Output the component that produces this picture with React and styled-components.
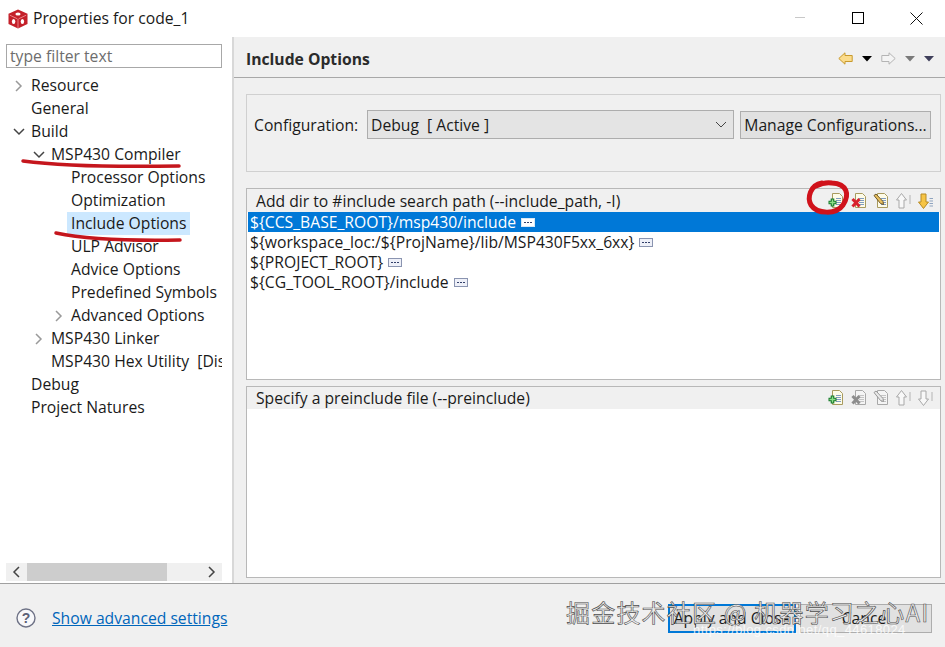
import React from "react";
import styled, { createGlobalStyle } from "styled-components";

const Global = createGlobalStyle`
  html, body {
    margin: 0;
    padding: 0;
    background: #f0f0f0;
  }
`;

const Window = styled.div`
  position: relative;
  width: 945px;
  height: 647px;
  overflow: hidden;
  display: flex;
  flex-direction: column;
  background: #f0f0f0;
  color: #1a1a1a;
  font-family: "Open Sans", "Noto Sans", sans-serif;
  font-size: 15.7px;
`;

const TitleBar = styled.div`
  height: 37px;
  flex: none;
  background: #fff;
  display: flex;
  align-items: center;
  padding: 0 0 0 8px;
`;

const Title = styled.div`
  margin-left: 5px;
  flex: 1;
  margin-top: -1px;
`;

const WinButtons = styled.div`
  display: flex;
  align-items: center;
  margin-top: -1px;
`;

const WinButton = styled.div`
  width: 58px;
  height: 35px;
  display: flex;
  align-items: center;
  justify-content: center;
`;

const Main = styled.div`
  flex: 1;
  display: flex;
  min-height: 0;
  border-bottom: 1px solid #a0a0a0;
`;

const Sidebar = styled.div`
  width: 234px;
  flex: none;
  background: #fff;
  display: flex;
  flex-direction: column;
  padding: 7px 10px 2px 6px;
  box-sizing: border-box;
  border-right: 2px solid #d8d8d8;
`;

const Filter = styled.div`
  height: 24px;
  flex: none;
  border: 1px solid #a8a8a8;
  box-sizing: border-box;
  padding-left: 3px;
  line-height: 22px;
  color: #6d6d6d;
`;

const Tree = styled.div`
  flex: 1;
  padding-top: 6px;
  overflow: hidden;
`;

const Row = styled.div`
  height: 23px;
  display: flex;
  align-items: center;
  white-space: nowrap;
  padding-left: ${(p) => p.$level * 20 + 6}px;
`;

const Twist = styled.span`
  width: 19px;
  flex: none;
  box-sizing: border-box;
  padding-left: 1px;
  display: flex;
  align-items: center;
`;

const Label = styled.span`
  padding: 0 4px;
  margin-left: -4px;
  line-height: 23px;
  background: ${(p) => (p.$selected ? "#cce8ff" : "transparent")};
`;

const HScroll = styled.div`
  height: 18px;
  flex: none;
  display: flex;
  background: #f0f0f0;
`;

const ScrollEnd = styled.div`
  width: 21px;
  display: flex;
  align-items: center;
  justify-content: center;
`;

const ScrollTrack = styled.div`
  flex: 1;
  display: flex;
`;

const ScrollThumb = styled.div`
  width: 140px;
  background: #cdcdcd;
`;

const Content = styled.div`
  flex: 1;
  min-width: 0;
  display: flex;
  flex-direction: column;
`;

const Header = styled.div`
  height: 41px;
  flex: none;
  box-sizing: border-box;
  border-bottom: 1px solid #a8a8a8;
  display: flex;
  align-items: center;
  padding: 3px 11px 0 12px;
`;

const Heading = styled.div`
  flex: 1;
  font-weight: 700;
  color: #2b2b2b;
`;

const NavIcons = styled.div`
  display: flex;
  align-items: center;
  gap: 9px;
`;

const Body = styled.div`
  flex: 1;
  min-height: 0;
  display: flex;
  flex-direction: column;
  padding: 16px 4px 5px 12px;
`;

const ConfigBox = styled.div`
  height: 78px;
  flex: none;
  box-sizing: border-box;
  border: 1px solid #d0d0d0;
  display: flex;
  align-items: flex-start;
  padding: 15px 9px 0 7px;
`;

const ConfigLabel = styled.span`
  line-height: 30px;
  width: 113px;
  flex: none;
  white-space: nowrap;
`;

const Select = styled.div`
  width: 367px;
  height: 29px;
  flex: none;
  box-sizing: border-box;
  background: #e4e4e4;
  border: 1px solid #adadad;
  display: flex;
  align-items: center;
  justify-content: space-between;
  padding: 0 6px 0 3px;
`;

const ManageButton = styled.div`
  margin: 1px 0 0 6px;
  flex: 1;
  height: 28px;
  box-sizing: border-box;
  background: #e1e1e1;
  border: 1px solid #adadad;
  display: flex;
  align-items: center;
  justify-content: center;
  white-space: nowrap;
`;

const Panel = styled.div`
  flex: 1;
  min-height: 0;
  box-sizing: border-box;
  border: 1px solid #b8b8b8;
  margin-top: ${(p) => p.$top}px;
  display: flex;
  flex-direction: column;
`;

const PanelHead = styled.div`
  height: ${(p) => p.$height}px;
  flex: none;
  display: flex;
  align-items: center;
  justify-content: space-between;
  padding: 0 6px 0 9px;
`;

const Tools = styled.div`
  display: flex;
  align-items: center;
  gap: 6.5px;
`;

const List = styled.div`
  flex: 1;
  background: #fff;
`;

const ListRow = styled.div`
  height: 20px;
  display: flex;
  align-items: center;
  gap: 5px;
  padding-left: 2px;
  margin: 0 1px;
  white-space: nowrap;
  background: ${(p) => (p.$selected ? "#0078d7" : "transparent")};
  color: ${(p) => (p.$selected ? "#fff" : "#1a1a1a")};
`;

const Dots = styled.span`
  width: 14px;
  height: 9px;
  box-sizing: border-box;
  border: 1px solid ${(p) => (p.$selected ? "#d8e8f6" : "#8a94b0")};
  background: ${(p) => (p.$selected ? "#fff" : "#eef0f8")};
  display: inline-flex;
  align-items: center;
  justify-content: center;
  gap: 1px;
  margin-top: 1px;

  i {
    width: 2px;
    height: 1px;
    background: #33406a;
  }
`;

const Footer = styled.div`
  height: 63px;
  flex: none;
  box-sizing: border-box;
  display: flex;
  align-items: center;
  padding: 5px 13px 0 16px;
`;

const Link = styled.a`
  margin-left: 16px;
  color: #0066bb;
  text-decoration: underline;
  flex: 1;
`;

const FooterButton = styled.div`
  height: 29px;
  box-sizing: border-box;
  width: ${(p) => p.$width}px;
  margin-left: 4px;
  background: #e1e1e1;
  border: ${(p) => (p.$primary ? "2px solid #0078d7" : "1px solid #adadad")};
  display: flex;
  align-items: center;
  justify-content: center;
`;

const Scribbles = styled.svg`
  position: absolute;
  left: 0;
  top: 0;
  pointer-events: none;
`;

const Watermark = styled.div`
  position: absolute;
  left: 566px;
  top: 596px;
  font-family: "Noto Sans CJK SC", sans-serif;
  font-size: 24px;
  line-height: 32px;
  letter-spacing: 1.2px;
  white-space: nowrap;
  color: #ececec;
  -webkit-text-stroke: 0.6px #4a4a4a;
`;

const WatermarkUrl = styled.div`
  position: absolute;
  left: 693px;
  top: 622px;
  font-family: "Liberation Sans", sans-serif;
  font-size: 13px;
  letter-spacing: 0.4px;
  white-space: nowrap;
  color: rgba(255, 255, 255, 0.8);
`;

const Logo = () => (
  <svg width="20" height="20" viewBox="0 0 20 20">
    <path d="M10 0.5 L19.5 4.8 V15 L10 19.5 L0.5 15 V4.8 Z" fill="#c4202a" />
    <path d="M1.8 6.2 L9.4 9.8 M18.2 6.2 L10.6 9.8 M10 10 V19" stroke="#f08a8e" strokeWidth="0.9" />
    <ellipse cx="10" cy="5" rx="2.6" ry="1.5" fill="#fff" />
    <ellipse cx="5.6" cy="12.4" rx="1.7" ry="2.5" fill="#fff" />
    <ellipse cx="14.4" cy="12.4" rx="1.7" ry="2.5" fill="#fff" />
  </svg>
);

const Caret = ({ color }) => (
  <svg width="10" height="6" viewBox="0 0 10 6">
    <path d="M0 0 H10 L5 5.5 Z" fill={color} />
  </svg>
);

const NavArrow = ({ dir, fill, stroke }) => (
  <svg width="15" height="13" viewBox="0 0 15 13" style={{ transform: dir === "right" ? "scaleX(-1)" : "none" }}>
    <path d="M0.8 6.5 L7 0.8 V3.5 H14.2 V9.5 H7 V12.2 Z" fill={fill} stroke={stroke} strokeWidth="1" />
  </svg>
);

const Chevron = ({ dir, color = "#444", w = 1.5 }) => {
  const paths = {
    right: "M3 1 L8 6 L3 11",
    down: "M1 3 L6 8 L11 3",
    left: "M8 1 L3 6 L8 11",
  };
  return (
    <svg width="12" height="12" viewBox="0 0 12 12">
      <path d={paths[dir]} fill="none" stroke={color} strokeWidth={w} />
    </svg>
  );
};

// page with lines, shared by the add / delete / edit buttons
const Page = ({ off }) => (
  <g>
    <path
      d="M4.5 0.5 H11.5 L14.5 3.5 V14.5 H4.5 Z"
      fill={off ? "#f4f4f4" : "#fdfbe8"}
      stroke={off ? "#a8a8a8" : "#a89a5e"}
    />
    <path
      d="M8 5.5 H13 M8 7.5 H13 M8 9.5 H13 M8 11.5 H13"
      stroke={off ? "#c4c4c4" : "#7f9cc0"}
    />
  </g>
);

const AddIcon = () => (
  <svg width="16" height="16" viewBox="0 0 16 16">
    <Page />
    <path d="M4.5 5.5 V13.5 M0.5 9.5 H8.5" stroke="#15782a" strokeWidth="3.6" />
    <path d="M4.5 6.5 V12.5 M1.5 9.5 H7.5" stroke="#8fe08a" strokeWidth="1.4" />
  </svg>
);

const DeleteIcon = ({ off }) => (
  <svg width="16" height="16" viewBox="0 0 16 16">
    <Page off={off} />
    <path d="M1.5 6 L8.5 13.5 M8.5 6 L1.5 13.5" stroke={off ? "#8d8d8d" : "#d8202c"} strokeWidth="3" />
  </svg>
);

const EditIcon = ({ off }) => (
  <svg width="16" height="16" viewBox="0 0 16 16">
    <Page off={off} />
    <path
      d="M1 2.5 L3 1 L10 8.5 L10.5 11.5 L7.5 10.5 Z"
      fill={off ? "#e8e8e8" : "#e8c060"}
      stroke={off ? "#8d8d8d" : "#5f4a1c"}
      strokeWidth="0.9"
    />
  </svg>
);

const MoveIcon = ({ dir, off }) => (
  <svg width="16" height="18" viewBox="0 0 16 18">
    <g transform={dir === "down" ? "rotate(180 5.5 9)" : undefined}>
      <path
        d="M5.5 1.5 L10.5 8 H8 V16 H3 V8 H0.5 Z"
        fill={off ? "#f8f8f8" : "#f6c445"}
        stroke={off ? "#a8a8a8" : "#b78a24"}
      />
    </g>
    {off ? (
      <path d="M14 3 V12" stroke="#b4b4b4" />
    ) : (
      <path d="M11.5 6.5 H15 M11.5 9 H15 M11.5 11.5 H15 M11.5 14 H15" stroke="#8fa4bf" />
    )}
  </svg>
);

const HelpIcon = () => (
  <svg width="20" height="20" viewBox="0 0 20 20">
    <circle cx="10" cy="10" r="9" fill="#f8f8fa" stroke="#6e7286" strokeWidth="1.4" />
    <text x="10" y="15" textAnchor="middle" fontFamily="Liberation Sans" fontWeight="700" fontSize="14" fill="#5c6076">
      ?
    </text>
  </svg>
);

const treeRows = [
  { text: "Resource", level: 0, twist: "right", light: true },
  { text: "General", level: 0 },
  { text: "Build", level: 0, twist: "down" },
  { text: "MSP430 Compiler", level: 1, twist: "down" },
  { text: "Processor Options", level: 2 },
  { text: "Optimization", level: 2 },
  { text: "Include Options", level: 2, selected: true },
  { text: "ULP Advisor", level: 2 },
  { text: "Advice Options", level: 2 },
  { text: "Predefined Symbols", level: 2 },
  { text: "Advanced Options", level: 2, twist: "right", light: true },
  { text: "MSP430 Linker", level: 1, twist: "right", light: true },
  { text: "MSP430 Hex Utility\u00a0\u00a0[Disabled]", level: 1 },
  { text: "Debug", level: 0 },
  { text: "Project Natures", level: 0 },
];

const includePaths = [
  "${CCS_BASE_ROOT}/msp430/include",
  "${workspace_loc:/${ProjName}/lib/MSP430F5xx_6xx}",
  "${PROJECT_ROOT}",
  "${CG_TOOL_ROOT}/include",
];

const App = () => {
  return (
    <Window>
      <Global />
      <TitleBar>
        <Logo />
        <Title>Properties for code_1</Title>
        <WinButtons>
          <WinButton>
            <svg width="10" height="2"><rect width="10" height="1" fill="#c8c8c8" /></svg>
          </WinButton>
          <WinButton>
            <svg width="12" height="12"><rect x="0.5" y="0.5" width="11" height="11" fill="none" stroke="#000" /></svg>
          </WinButton>
          <WinButton>
            <svg width="13" height="13"><path d="M0.5 0.5 L12.5 12.5 M12.5 0.5 L0.5 12.5" stroke="#111" /></svg>
          </WinButton>
        </WinButtons>
      </TitleBar>
      <Main>
        <Sidebar>
          <Filter>type filter text</Filter>
          <Tree>
            {treeRows.map((r) => (
              <Row key={r.text} $level={r.level}>
                <Twist>
                  {r.twist && <Chevron dir={r.twist} color={r.light ? "#9a9a9a" : "#444"} />}
                </Twist>
                <Label $selected={r.selected}>{r.text}</Label>
              </Row>
            ))}
          </Tree>
          <HScroll>
            <ScrollEnd><Chevron dir="left" /></ScrollEnd>
            <ScrollTrack><ScrollThumb /></ScrollTrack>
            <ScrollEnd><Chevron dir="right" /></ScrollEnd>
          </HScroll>
        </Sidebar>
        <Content>
          <Header>
            <Heading>Include Options</Heading>
            <NavIcons>
              <NavArrow dir="left" fill="#fbdc8c" stroke="#c89a2e" />
              <Caret color="#000" />
              <NavArrow dir="right" fill="#f4f4f4" stroke="#b4b4b4" />
              <Caret color="#7a7a7a" />
              <Caret color="#3f3f5a" />
            </NavIcons>
          </Header>
          <Body>
            <ConfigBox>
              <ConfigLabel>Configuration:</ConfigLabel>
              <Select>
                <span>Debug&nbsp; [ Active ]</span>
                <Chevron dir="down" w={1} />
              </Select>
              <ManageButton>Manage Configurations...</ManageButton>
            </ConfigBox>
            <Panel $top={16}>
              <PanelHead $height={23}>
                <span>Add dir to #include search path (--include_path, -I)</span>
                <Tools>
                  <AddIcon />
                  <DeleteIcon />
                  <EditIcon />
                  <MoveIcon dir="up" off />
                  <MoveIcon dir="down" />
                </Tools>
              </PanelHead>
              <List>
                {includePaths.map((p, i) => (
                  <ListRow key={p} $selected={i === 0}>
                    {p}
                    <Dots $selected={i === 0}><i /><i /><i /></Dots>
                  </ListRow>
                ))}
              </List>
            </Panel>
            <Panel $top={6}>
              <PanelHead $height={22}>
                <span>Specify a preinclude file (--preinclude)</span>
                <Tools>
                  <AddIcon />
                  <DeleteIcon off />
                  <EditIcon off />
                  <MoveIcon dir="up" off />
                  <MoveIcon dir="down" off />
                </Tools>
              </PanelHead>
              <List />
            </Panel>
          </Body>
        </Content>
      </Main>
      <Footer>
        <HelpIcon />
        <Link>Show advanced settings</Link>
        <FooterButton $primary $width={128}>Apply and Close</FooterButton>
        <FooterButton $width={132}>Cancel</FooterButton>
      </Footer>

      <Scribbles width="945" height="647" viewBox="0 0 945 647">
        <path d="M23 161 C60 166 120 167 179 166" fill="none" stroke="#c5161d" strokeWidth="3.5" strokeLinecap="round" />
        <path d="M56 233 C90 240 130 241 180 240" fill="none" stroke="#c5161d" strokeWidth="3.5" strokeLinecap="round" />
        <path
          d="M822 183 C810 185 807 198 811 205 C817 214 836 215 843 205 C850 194 847 184 832 183 C826 182 820 184 816 186"
          fill="none"
          stroke="#d0121b"
          strokeWidth="5"
          strokeLinecap="round"
        />
      </Scribbles>
      <Watermark>掘金技术社区 @ 机器学习之心AI</Watermark>
      <WatermarkUrl>https://blog.csdn.net/qq_44618024</WatermarkUrl>
    </Window>
  );
};

export default App;
